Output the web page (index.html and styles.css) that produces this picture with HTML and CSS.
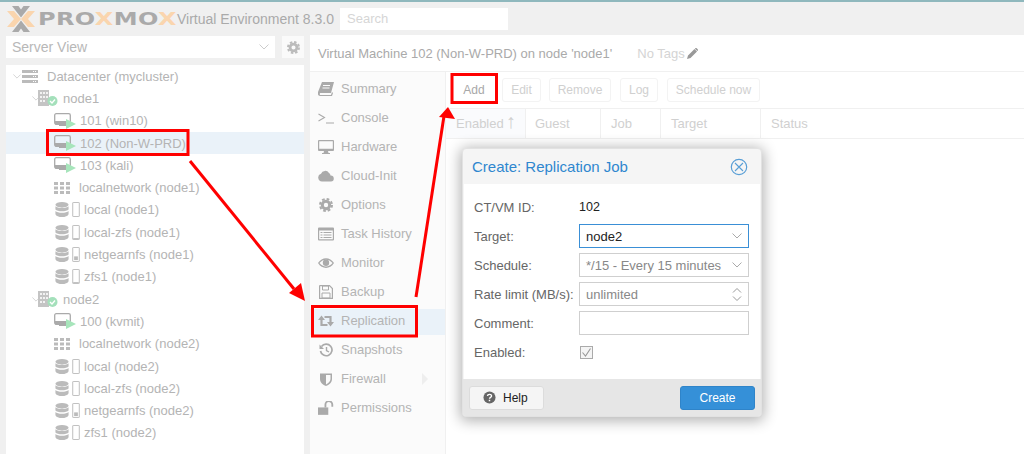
FILE: index.html
```html
<!DOCTYPE html>
<html lang="en">
<head>
<meta charset="utf-8">
<title>Proxmox Virtual Environment</title>
<link rel="stylesheet" href="styles.css">
</head>
<body>
<svg class="defs" xmlns="http://www.w3.org/2000/svg">
  <symbol id="chev" viewBox="0 0 10 6"><path d="M.5.5 5 5 9.500.5" fill="none" stroke="currentColor"/></symbol>
  <symbol id="dc" viewBox="0 0 16 13"><path d="M0 0h16v3H0zM0 5h16v3H0zM0 10h16v3H0z" fill="#bbb"/><path d="M11 1h1v1h-1zM13 1h1v1h-1zM11 6h1v1h-1zM13 6h1v1h-1zM11 11h1v1h-1zM13 11h1v1h-1z" fill="#fff"/></symbol>
  <symbol id="node" viewBox="0 0 20 16"><path d="M0 0h11v16H0z" fill="#c4c4c4"/><path d="M2 2h2v2H2zM5 2h2v2H5zM8 2h2v2H8zM2 6h2v2H2zM5 6h2v2H5zM8 6h2v2H8zM2 10h2v2H2zM5 10h2v2H5z" fill="#f2f2f2"/><circle cx="14.500" cy="11" r="5" fill="#a4e0bb"/><path d="m12 11 2 2 3-3.500" fill="none" stroke="#fff" stroke-width="1.300"/></symbol>
  <symbol id="vm" viewBox="0 0 22 16"><rect x=".7" y=".7" width="15.600" height="10.600" rx="1.500" fill="none" stroke="#aaa" stroke-width="1.300"/><path d="M1 8h15v3.500H1zM5 11h7v2H5z" fill="#aaa"/><path d="m12 6 10 5-10 5z" fill="#a7e5bb"/></symbol>
  <symbol id="net" viewBox="0 0 16 12"><path d="M0 0h4v3H0zM6 0h4v3H6zM12 0h4v3h-4zM0 4.500h4v3H0zM6 4.500h4v3H6zM12 4.500h4v3h-4zM0 9h4v3H0zM6 9h4v3H6zM12 9h4v3h-4z" fill="#bbb"/></symbol>
  <symbol id="db" viewBox="0 0 14 16"><ellipse cx="7" cy="3" rx="7" ry="3" fill="#bbb"/><path d="M0 4.500c2 2.500 12 2.500 14 0V8c-2 2.500-12 2.500-14 0zM0 9.500c2 2.500 12 2.500 14 0V13c-1 4-13 4-14 0z" fill="#bbb"/></symbol>
  <symbol id="bar" viewBox="0 0 8 16"><rect x=".5" y=".5" width="7" height="15" rx=".5" fill="none" stroke="#bbb"/></symbol>
  <symbol id="barlow" viewBox="0 0 8 16"><rect x=".5" y=".5" width="7" height="15" rx=".5" fill="none" stroke="#bbb"/><path d="M1 14h6v1H1z" fill="#bbb"/></symbol>
  <symbol id="barmid" viewBox="0 0 8 16"><rect x=".5" y=".5" width="7" height="15" rx=".5" fill="none" stroke="#bbb"/><path d="M2 10h4v4H2z" fill="#bbb"/></symbol>
  <symbol id="gear" viewBox="0 0 14 14"><circle cx="7" cy="7" r="3.700" fill="none" stroke="currentColor" stroke-width="3"/><circle cx="7" cy="7" r="6" fill="none" stroke="currentColor" stroke-width="2" stroke-dasharray="2.700 2"/></symbol>
  <symbol id="book" viewBox="0 0 16 14"><path d="M4 0h12l-3 11H2.500c-1 0-1 2 0 2H13l1-3 1 1-1 3H2C0 14-.5 12 0 10zM5 3v1h7V3zM4.500 5.500v1h7v-1z" fill="#aaa" fill-rule="evenodd"/></symbol>
  <symbol id="term" viewBox="0 0 16 12"><path d="m.5 2 6 3.500-6 3.500M8 11h8" fill="none" stroke="#aaa" stroke-width="1.100"/></symbol>
  <symbol id="desk" viewBox="0 0 16 14"><path d="M1 0h14a1 1 0 0 1 1 1v9a1 1 0 0 1-1 1h-5l.5 2H12v1H4v-1h1.500l.5-2H1a1 1 0 0 1-1-1V1a1 1 0 0 1 1-1zm.2 1.200v7.600h13.600V1.200z" fill="#aaa" fill-rule="evenodd"/></symbol>
  <symbol id="cloud" viewBox="0 0 16 11"><path d="M4 11a4 4 0 0 1-1-7.800A4.500 4.500 0 0 1 11 2.500 3 3 0 0 1 12.500 5 3 3 0 0 1 13 11z" fill="#aaa"/></symbol>
  <symbol id="list" viewBox="0 0 16 13"><path d="M1 0h14a1 1 0 0 1 1 1v11a1 1 0 0 1-1 1H1a1 1 0 0 1-1-1V1a1 1 0 0 1 1-1zm.2 3v8.800h13.600V3zM2.500 4.500h2v1h-2zM5.500 4.500h8v1h-8zM2.500 7h2v1h-2zM5.500 7h8v1h-8zM2.500 9.500h2v1h-2zM5.500 9.500h8v1h-8z" fill="#aaa" fill-rule="evenodd"/></symbol>
  <symbol id="eye" viewBox="0 0 16 10"><path d="M0 5c4-6.500 12-6.500 16 0-4 6.500-12 6.500-16 0zm1.500 0c3.500 4.500 9.500 4.500 13 0-3.500-4.500-9.500-4.500-13 0z" fill="#aaa" fill-rule="evenodd"/><circle cx="8" cy="4.700" r="3.200" fill="#aaa"/></symbol>
  <symbol id="save" viewBox="0 0 14 14"><path d="M1 .6h9.500L13.400 3.500V13.400H.6V1z" fill="none" stroke="#aaa" stroke-width="1.200"/><path d="M3.500 1h6v4h-6zM3 8h8v5H3z" fill="none" stroke="#aaa"/></symbol>
  <symbol id="rep" viewBox="0 0 16 11"><path d="M3.500 4v5.500h6M12.500 7V1.500h-6" fill="none" stroke="#aaa" stroke-width="2.200"/><path d="M0 4.500 3.500 0 7 4.500zM9 6.500l3.500 4.500L16 6.500z" fill="#aaa"/></symbol>
  <symbol id="hist" viewBox="0 0 14 14"><path d="M2.500 3.500a5.800 5.800 0 1 1-1 4.500" fill="none" stroke="#aaa" stroke-width="1.700"/><path d="M.5 1.500 5 6H.5z" fill="#aaa"/><path d="M7.500 4v3.500l2.500 1.500" fill="none" stroke="#aaa" stroke-width="1.400"/></symbol>
  <symbol id="shield" viewBox="0 0 12 14"><path d="M0 1.500h12V7c0 3.500-3 6-6 7-3-1-6-3.500-6-7zM6 3v9.400C8 11.500 10.500 9.500 10.500 7V3z" fill="#aaa" fill-rule="evenodd"/></symbol>
  <symbol id="lock" viewBox="0 0 14 12"><path d="M0 5.500h9V12H0z" fill="#aaa"/><path d="M6.500 5.500V3a3 3 0 0 1 6 0v2" fill="none" stroke="#aaa" stroke-width="1.600"/></symbol>
  <symbol id="pen" viewBox="0 0 11 11"><path d="M7.500 1 10 3.500 3.500 10 0 11l1-3.500zM8.300.3a1 1 0 0 1 1.400 0l1 1a1 1 0 0 1 0 1.400l-.4.400L7.900.7z" fill="#999"/></symbol>
</svg>

<header class="topbar">
  <svg class="logo-x" viewBox="0 0 28 26" xmlns="http://www.w3.org/2000/svg"><path d="M0 5h7l7 8-7 8H0l7-8zM28 5h-7l-7 8 7 8h7l-7-8z" fill="#fad5ae"/><path d="M5 0h6.500L14 3.500 16.500 0H23l-9 11.500zM5 26h6.500l2.500-3.500 2.500 3.500H23l-9-11.500z" fill="#aaa"/></svg>
  <span class="wordmark">PRO<span class="orange">X</span>MO<span class="orange">X</span></span>
  <span class="version">Virtual Environment 8.3.0</span>
  <div class="search">Search</div>
</header>

<main class="workspace">
  <aside class="sidebar">
    <div class="view-row">
      <div class="view-select">Server View<svg class="chev"><use href="#chev"/></svg></div>
      <div class="gear-btn"><svg class="gear"><use href="#gear"/></svg></div>
    </div>
    <div class="tree">
      <div class="row lv0"><svg class="chev-t"><use href="#chev"/></svg><svg class="i-dc"><use href="#dc"/></svg><span>Datacenter (mycluster)</span></div>
      <div class="row lv1"><svg class="chev-t"><use href="#chev"/></svg><svg class="i-node"><use href="#node"/></svg><span>node1</span></div>
      <div class="row lv2"><svg class="i-vm"><use href="#vm"/></svg><span>101 (win10)</span></div>
      <div class="row lv2 selected"><svg class="i-vm"><use href="#vm"/></svg><span>102 (Non-W-PRD)</span></div>
      <div class="row lv2"><svg class="i-vm"><use href="#vm"/></svg><span>103 (kali)</span></div>
      <div class="row lv2"><svg class="i-net"><use href="#net"/></svg><span>localnetwork (node1)</span></div>
      <div class="row lv2"><svg class="i-db"><use href="#db"/></svg><svg class="i-bar"><use href="#bar"/></svg><span>local (node1)</span></div>
      <div class="row lv2"><svg class="i-db"><use href="#db"/></svg><svg class="i-bar"><use href="#barlow"/></svg><span>local-zfs (node1)</span></div>
      <div class="row lv2"><svg class="i-db"><use href="#db"/></svg><svg class="i-bar"><use href="#barmid"/></svg><span>netgearnfs (node1)</span></div>
      <div class="row lv2"><svg class="i-db"><use href="#db"/></svg><svg class="i-bar"><use href="#barlow"/></svg><span>zfs1 (node1)</span></div>
      <div class="row lv1"><svg class="chev-t"><use href="#chev"/></svg><svg class="i-node"><use href="#node"/></svg><span>node2</span></div>
      <div class="row lv2"><svg class="i-vm"><use href="#vm"/></svg><span>100 (kvmit)</span></div>
      <div class="row lv2"><svg class="i-net"><use href="#net"/></svg><span>localnetwork (node2)</span></div>
      <div class="row lv2"><svg class="i-db"><use href="#db"/></svg><svg class="i-bar"><use href="#bar"/></svg><span>local (node2)</span></div>
      <div class="row lv2"><svg class="i-db"><use href="#db"/></svg><svg class="i-bar"><use href="#bar"/></svg><span>local-zfs (node2)</span></div>
      <div class="row lv2"><svg class="i-db"><use href="#db"/></svg><svg class="i-bar"><use href="#barmid"/></svg><span>netgearnfs (node2)</span></div>
      <div class="row lv2"><svg class="i-db"><use href="#db"/></svg><svg class="i-bar"><use href="#bar"/></svg><span>zfs1 (node2)</span></div>
    </div>
  </aside>

  <section class="panel">
    <div class="title-bar">
      <span class="vm-title">Virtual Machine 102 (Non-W-PRD) on node 'node1'</span>
      <span class="tags">No Tags</span><svg class="pen"><use href="#pen"/></svg>
    </div>
    <div class="panel-body">
      <nav class="nav">
        <div class="nav-item"><svg><use href="#book"/></svg>Summary</div>
        <div class="nav-item"><svg><use href="#term"/></svg>Console</div>
        <div class="nav-item"><svg><use href="#desk"/></svg>Hardware</div>
        <div class="nav-item"><svg><use href="#cloud"/></svg>Cloud-Init</div>
        <div class="nav-item"><svg class="nav-gear"><use href="#gear"/></svg>Options</div>
        <div class="nav-item"><svg><use href="#list"/></svg>Task History</div>
        <div class="nav-item"><svg><use href="#eye"/></svg>Monitor</div>
        <div class="nav-item"><svg><use href="#save"/></svg>Backup</div>
        <div class="nav-item active"><svg><use href="#rep"/></svg>Replication</div>
        <div class="nav-item"><svg><use href="#hist"/></svg>Snapshots</div>
        <div class="nav-item"><svg><use href="#shield"/></svg>Firewall<i class="expander"></i></div>
        <div class="nav-item"><svg><use href="#lock"/></svg>Permissions</div>
      </nav>
      <div class="content">
        <div class="toolbar">
          <div class="tbtn add">Add</div>
          <div class="tbtn edit">Edit</div>
          <div class="tbtn remove">Remove</div>
          <div class="tbtn log">Log</div>
          <div class="tbtn sched">Schedule now</div>
        </div>
        <div class="grid-head">
          <div class="col c-enabled">Enabled<span class="sort">↑</span></div>
          <div class="col c-guest">Guest</div>
          <div class="col c-job">Job</div>
          <div class="col c-target">Target</div>
          <div class="col c-status">Status</div>
        </div>
      </div>
    </div>
  </section>
</main>

<div class="dialog">
  <div class="dlg-head">
    <span>Create: Replication Job</span>
    <svg class="close" viewBox="0 0 18 18" xmlns="http://www.w3.org/2000/svg"><circle cx="9" cy="9" r="7.700" fill="none" stroke="#5a9fd6" stroke-width="1.200"/><path d="m5 5 8 8M13 5l-8 8" stroke="#5a9fd6" stroke-width="1.100"/></svg>
  </div>
  <div class="dlg-body">
    <div class="frow"><label>CT/VM ID:</label><span class="val">102</span></div>
    <div class="frow"><label>Target:</label><div class="field focus">node2<svg class="fchev"><use href="#chev"/></svg></div></div>
    <div class="frow"><label>Schedule:</label><div class="field">*/15 - Every 15 minutes<svg class="fchev"><use href="#chev"/></svg></div></div>
    <div class="frow"><label>Rate limit (MB/s):</label><div class="field">unlimited
      <svg class="spin" viewBox="0 0 10 15" xmlns="http://www.w3.org/2000/svg"><path d="M1 5.500 5 1.500l4 4M1 9.500l4 4 4-4" fill="none" stroke="#999"/></svg></div></div>
    <div class="frow"><label>Comment:</label><div class="field"></div></div>
    <div class="frow"><label>Enabled:</label>
      <svg class="check" viewBox="0 0 13 13" xmlns="http://www.w3.org/2000/svg"><rect x=".5" y=".5" width="12" height="12" fill="#f4f4f4" stroke="#aaa"/><path d="m2.500 6.500 3 3.500 5-7.500" fill="none" stroke="#999" stroke-width="1.100"/></svg></div>
  </div>
  <div class="dlg-foot">
    <div class="help"><svg viewBox="0 0 14 14" xmlns="http://www.w3.org/2000/svg"><circle cx="7" cy="7" r="6.500" fill="#666"/><path d="M4.800 5.400C5 3 9.200 3 9.200 5.300c0 1.600-2.200 1.500-2.200 3" fill="none" stroke="#fff" stroke-width="1.500"/><path d="M6.200 9.400h1.600V11H6.200z" fill="#fff"/></svg>Help</div>
    <div class="create">Create</div>
  </div>
</div>

<svg class="annot" viewBox="0 0 1024 454" xmlns="http://www.w3.org/2000/svg">
  <g fill="none" stroke="#f00" stroke-width="3">
    <rect x="47.500" y="130.500" width="140.500" height="24"/>
    <rect x="312.500" y="306.500" width="104" height="29.500"/>
    <rect x="452" y="74.500" width="44.500" height="28"/>
  </g>
  <path d="M190 161 294 289" stroke="#f00" stroke-width="3" fill="none"/>
  <path d="m305 301-16-8 12-10z" fill="#f00"/>
  <path d="M416 297 444 116" stroke="#f00" stroke-width="3" fill="none"/>
  <path d="m448 107 7 12-16-2z" fill="#f00"/>
</svg>
</body>
</html>
```
FILE: styles.css
```css
* { box-sizing: border-box; }
html, body { margin: 0; height: 100%; }
body {
  position: relative;
  width: 1024px;
  height: 454px;
  overflow: hidden;
  background: #f0f0f0;
  font-family: "Liberation Sans", Arial, sans-serif;
  font-size: 13px;
  color: #b4b4b4;
}
.defs { display: none; }

.topbar {
  height: 35px;
  border-top: 2px solid #8fb8bd;
  display: flex;
  align-items: center;
  padding-left: 7px;
}
.logo-x { width: 28px; height: 26px; flex: none; }
.wordmark {
  width: 135px;
  margin-left: 3px;
  font-family: "DejaVu Sans", sans-serif;
  font-weight: 700;
  font-size: 17.500px;
  letter-spacing: 0.300px;
  color: #aaa;
  white-space: nowrap;
  transform: scaleX(1.370);
  transform-origin: left center;
}
.orange { color: #fad5ae; }
.version { width: 163px; font-size: 14px; color: #aaa; white-space: nowrap; margin-left: 4px; }
.search {
  width: 168px;
  height: 22px;
  margin-top: 1px;
  padding-left: 7px;
  background: #fff;
  color: #d6d6d6;
  line-height: 22px;
}

.workspace { display: flex; height: 419px; }
.sidebar { width: 310px; padding: 1px 6px 0; flex: none; display: flex; flex-direction: column; }
.view-row { display: flex; gap: 7px; height: 22px; margin-bottom: 7px; flex: none; }
.view-select {
  width: 269px;
  background: #fff;
  padding-left: 6px;
  line-height: 22px;
  font-size: 14px;
  color: #b8b8b8;
  display: flex;
  justify-content: space-between;
  align-items: center;
}
.chev { width: 10px; height: 6px; margin-right: 6px; color: #ccc; }
.gear-btn { width: 22px; background: #fafafa; display: flex; align-items: center; justify-content: center; }
.gear { width: 13px; height: 13px; color: #bbb; }

.tree { flex: 1; background: #fff; }
.row {
  height: 22.300px;
  display: flex;
  align-items: center;
  font-size: 13px;
  white-space: nowrap;
}
.selected { background: #eaf2f9; }
.lv0 { padding-left: 7px; }
.lv1 { padding-left: 26px; }
.lv2 { padding-left: 48px; }
.chev-t { width: 8px; height: 5px; color: #ccc; margin-right: 1px; flex: none; }
.i-dc { width: 16px; height: 13px; margin-right: 9px; }
.i-node { width: 20px; height: 16px; margin: 0 5px 0 -3px; flex: none; }
.i-vm { width: 22px; height: 16px; margin-right: 4px; flex: none; }
.i-net { width: 16px; height: 12px; margin-right: 9px; flex: none; }
.i-db { width: 14px; height: 15px; margin: 0 3px 0 1px; flex: none; }
.i-bar { width: 8px; height: 15px; margin-right: 4px; flex: none; }

.panel { flex: 1; background: #fff; display: flex; flex-direction: column; }
.title-bar {
  height: 37px;
  border-bottom: 1px solid #f0f0f0;
  padding-left: 8px;
  display: flex;
  align-items: center;
  white-space: nowrap;
}
.vm-title { color: #aaa; font-size: 13px; }
.tags { margin-left: 25px; color: #d4d4d4; font-size: 13px; }
.pen { width: 11px; height: 11px; margin-left: 2px; }

.panel-body { flex: 1; display: flex; }
.nav {
  width: 136px;
  flex: none;
  background: #fbfbfb;
  border-right: 1px solid #f0f0f0;
  padding-top: 2px;
}
.nav-item {
  height: 29px;
  display: flex;
  align-items: center;
  font-size: 13px;
  padding-left: 8px;
}
.nav-item svg { width: 16px; height: 14px; margin-right: 7px; flex: none; }
.nav-item .nav-gear { color: #aaa; }
.active { background: linear-gradient(#fbfbfb 3px, #eaf2f9 3px); }
.expander {
  border-left: 6px solid #eee;
  border-top: 6px solid transparent;
  border-bottom: 6px solid transparent;
  margin-left: 36px;
}

.content { flex: 1; }
.toolbar { height: 37px; padding: 6px 0 0 4px; display: flex; border-bottom: 1px solid #f0f0f0; }
.tbtn {
  height: 24px;
  border: 1px solid #f3f3f3;
  border-radius: 3px;
  color: #d0d0d0;
  font-size: 12px;
  line-height: 22px;
  text-align: center;
}
.add { width: 38px; color: #a8a8a8; border-color: #fff; margin: 0 9px 0 5px; }
.edit { width: 39px; margin-right: 8px; }
.remove { width: 62px; margin-right: 9px; }
.log { width: 38px; margin-right: 9px; }
.sched { width: 93px; }

.grid-head { height: 30px; display: flex; border-bottom: 1px solid #f0f0f0; color: #d0d0d0; font-size: 13px; }
.col { padding-left: 10px; line-height: 29px; border-right: 1px solid #f0f0f0; }
.c-enabled { width: 80px; background: #fafbfd; white-space: nowrap; }
.sort { font-size: 20px; margin-left: 2px; line-height: 20px; }
.c-guest { width: 75px; padding-left: 9px; }
.c-job { width: 60px; }
.c-target { width: 100px; }
.c-status { flex: 1; border-right: 0; }

.dialog {
  position: absolute;
  left: 462px;
  top: 148px;
  width: 300px;
  height: 269px;
  border: 1px solid #e2e2e2;
  border-radius: 4px;
  background: #f5f5f5;
  box-shadow: 0 2px 14px 2px rgba(0, 0, 0, .3);
  display: flex;
  flex-direction: column;
  overflow: hidden;
}
.dlg-head {
  height: 35px;
  flex: none;
  display: flex;
  justify-content: space-between;
  align-items: center;
  padding: 0 13px 0 9px;
  color: #2f87cf;
  font-size: 15px;
}
.close { width: 18px; height: 18px; margin-top: 1px; }
.dlg-body { flex: 1; background: #fff; padding: 11px 11px 0 10px; margin: 0 1px; }
.frow { display: flex; align-items: center; height: 24px; margin-bottom: 5px; }
.frow label { width: 105px; flex: none; color: #666; font-size: 13px; white-space: nowrap; }
.val { color: #222; font-size: 12.500px; }
.field {
  width: 171px;
  height: 24px;
  border: 1px solid #cfcfcf;
  padding-left: 6px;
  display: flex;
  align-items: center;
  justify-content: space-between;
  color: #888;
  font-size: 13px;
  white-space: nowrap;
}
.focus { border-color: #3a8fd6; color: #222; }
.fchev { width: 10px; height: 6px; margin-right: 6px; color: #aaa; flex: none; }
.spin { width: 10px; height: 15px; margin-right: 6px; flex: none; }
.check { width: 13px; height: 13px; margin-left: 1px; }
.dlg-foot {
  height: 37px;
  flex: none;
  background: #e6e6e6;
  display: flex;
  justify-content: space-between;
  align-items: center;
  padding: 0 6px;
}
.help {
  width: 75px;
  height: 24px;
  background: #f5f5f5;
  border: 1px solid #dcdcdc;
  border-radius: 3px;
  color: #222;
  font-size: 12px;
  display: flex;
  align-items: center;
  padding-left: 13px;
  gap: 7px;
}
.help svg { width: 13px; height: 13px; }
.create {
  width: 75px;
  height: 24px;
  background: #3590d8;
  border: 1px solid #2f84c9;
  border-radius: 3px;
  color: #fff;
  font-size: 12px;
  line-height: 22px;
  text-align: center;
}
.annot { position: absolute; left: 0; top: 0; width: 1024px; height: 454px; pointer-events: none; }
```
